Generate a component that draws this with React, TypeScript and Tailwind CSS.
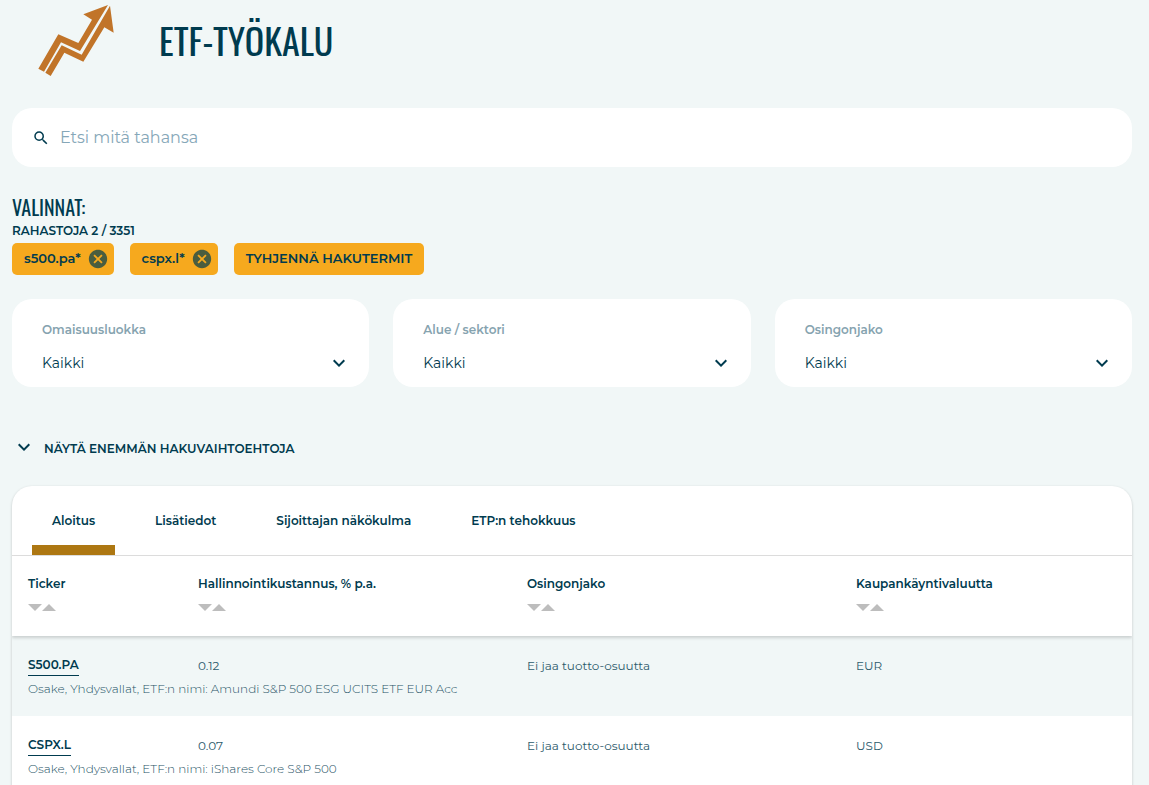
import { useState } from "react";
import type { ReactNode } from "react";
import { MdExpandMore, MdSearch, MdCancel } from "react-icons/md";

const filters = [
  { id: "asset-class", label: "Omaisuusluokka" },
  { id: "sector", label: "Alue / sektori" },
  { id: "dividend", label: "Osingonjako" },
];

const tabs = ["Aloitus", "Lisätiedot", "Sijoittajan näkökulma", "ETP:n tehokkuus"];

const columns = ["Ticker", "Hallinnointikustannus, % p.a.", "Osingonjako", "Kaupankäyntivaluutta"];

const funds = [
  {
    ticker: "S500.PA",
    fee: "0.12",
    dividend: "Ei jaa tuotto-osuutta",
    currency: "EUR",
    info: "Osake, Yhdysvallat, ETF:n nimi: Amundi S&P 500 ESG UCITS ETF EUR Acc",
  },
  {
    ticker: "CSPX.L",
    fee: "0.07",
    dividend: "Ei jaa tuotto-osuutta",
    currency: "USD",
    info: "Osake, Yhdysvallat, ETF:n nimi: iShares Core S&P 500",
  },
];

function Logo() {
  return (
    <svg viewBox="0 0 300 255" className="h-[85px] w-[100px] shrink-0 fill-[#c17429]" aria-hidden="true">
      <path d="M25 206 85 103 145 129 186 59 160 43 234 15 150 153 93 127 42 215Z" />
      <path d="M46 218 62 228 103 158 160 185 223 82 251 98 240 17 155 164 95 136Z" />
    </svg>
  );
}

function Chip({ children }: { children: ReactNode }) {
  return (
    <span className="flex h-8 items-center gap-[6px] rounded-[5px] bg-[#f6a91e] pr-[5px] pl-3 text-[13px] font-semibold">
      {children}
      <button type="button" aria-label="Poista" className="text-[#4a5d3f]">
        <MdCancel className="size-[22px]" />
      </button>
    </span>
  );
}

function Filter({ id, label }: { id: string; label: string }) {
  return (
    <div className="flex h-[88px] flex-1 flex-col rounded-[20px] bg-white pt-[23px] pr-[18px] pl-[30px]">
      <label htmlFor={id} className="text-[12px] leading-4 font-semibold text-[#86a3af]">
        {label}
      </label>
      <div className="mt-[11px] grid items-center">
        <select id={id} className="col-start-1 row-start-1 h-7 appearance-none bg-transparent text-sm outline-none">
          <option>Kaikki</option>
        </select>
        <MdExpandMore className="pointer-events-none col-start-1 row-start-1 size-6 justify-self-end" />
      </div>
    </div>
  );
}

function SortButtons({ column }: { column: string }) {
  return (
    <span className="mt-3 flex text-[#bdbdbd]">
      <button type="button" aria-label={column + " laskeva"}>
        <svg viewBox="0 0 14 7" className="h-[7px] w-[14px] fill-current">
          <path d="M0 0H14L7 7Z" />
        </svg>
      </button>
      <button type="button" aria-label={column + " nouseva"}>
        <svg viewBox="0 0 14 7" className="h-[7px] w-[14px] fill-current">
          <path d="M0 7H14L7 0Z" />
        </svg>
      </button>
    </span>
  );
}

export default function App() {
  const [active, setActive] = useState(0);

  return (
    <main className="min-h-screen bg-[#f1f7f7] pr-[17px] pl-3 font-['Montserrat','Inter',sans-serif] text-[#003b4f]">
      <header className="flex h-[108px] items-start gap-[29px] pl-[18px]">
        <Logo />
        <h1 className="pt-4 font-['Oswald','Liberation_Sans_Narrow',sans-serif] text-[36px] leading-[48px]">
          ETF-TYÖKALU
        </h1>
      </header>

      <div className="flex h-[59px] items-center gap-[10px] rounded-[20px] bg-white px-5">
        <MdSearch className="size-[18px] shrink-0" />
        <input
          type="text"
          aria-label="Etsi mitä tahansa"
          placeholder="Etsi mitä tahansa"
          className="min-w-0 flex-1 text-base outline-none placeholder:text-[#86a7b8]"
        />
      </div>

      <section className="pt-[26px]">
        <h2 className="font-['Oswald','Liberation_Sans_Narrow',sans-serif] text-xl leading-7">VALINNAT:</h2>
        <p className="mt-[2px] text-[12px] leading-4 font-semibold">RAHASTOJA 2 / 3351</p>
        <div className="mt-1 flex gap-4">
          <Chip>s500.pa*</Chip>
          <Chip>cspx.l*</Chip>
          <button type="button" className="h-8 rounded-[5px] bg-[#f6a91e] px-3 text-[13px] font-semibold">
            TYHJENNÄ HAKUTERMIT
          </button>
        </div>
      </section>

      <section className="flex gap-6 pt-6">
        {filters.map((filter) => (
          <Filter key={filter.id} id={filter.id} label={filter.label} />
        ))}
      </section>

      <button type="button" className="mt-12 flex h-6 gap-2 text-[12px] font-semibold">
        <MdExpandMore className="size-6" />
        <span className="leading-7">NÄYTÄ ENEMMÄN HAKUVAIHTOEHTOJA</span>
      </button>

      <section className="mt-[27px] overflow-hidden rounded-t-[20px] bg-white shadow-[0_1px_3px_rgba(0,0,0,0.2)]">
        <div role="tablist" className="flex h-[70px] gap-5 border-b border-[#dedede] px-5">
          {tabs.map((tab, index) => (
            <button
              key={tab}
              type="button"
              role="tab"
              aria-selected={index === active}
              onClick={() => setActive(index)}
              className={
                index === active
                  ? "border-b-[10px] border-[#ad7712] px-5 pt-[10px] text-[12px] font-semibold"
                  : "border-b-[10px] border-transparent px-5 pt-[10px] text-[12px] font-semibold"
              }
            >
              {tab}
            </button>
          ))}
        </div>

        <table className="w-full table-fixed border-collapse text-left text-[12px] leading-4">
          <colgroup>
            <col className="w-[170px]" />
            <col />
            <col />
            <col className="w-[292px]" />
          </colgroup>
          <thead className="relative shadow-[0_2px_3px_rgba(0,0,0,0.16)]">
            <tr className="h-20 bg-white">
              {columns.map((column) => (
                <th key={column} scope="col" className="px-4 pt-5 align-top font-semibold">
                  {column}
                  <SortButtons column={column} />
                </th>
              ))}
            </tr>
          </thead>
          {funds.map((fund) => (
            <tbody key={fund.ticker} className="odd:bg-[#f1f7f7] even:bg-white">
              <tr className="h-10 align-top text-[#2c5a6b]">
                <td className="px-4 pt-[21px]">
                  <a href="#" className="inline-block border-b border-[#003b4f] pb-[2px] font-semibold text-[#003b4f]">
                    {fund.ticker}
                  </a>
                </td>
                <td className="px-4 pt-[22px]">{fund.fee}</td>
                <td className="px-4 pt-[22px]">{fund.dividend}</td>
                <td className="px-4 pt-[22px]">{fund.currency}</td>
              </tr>
              <tr className="h-10 align-top">
                <td colSpan={4} className="px-4 pt-[5px] font-light text-[#1f5366]">
                  {fund.info}
                </td>
              </tr>
            </tbody>
          ))}
        </table>
      </section>
    </main>
  );
}
